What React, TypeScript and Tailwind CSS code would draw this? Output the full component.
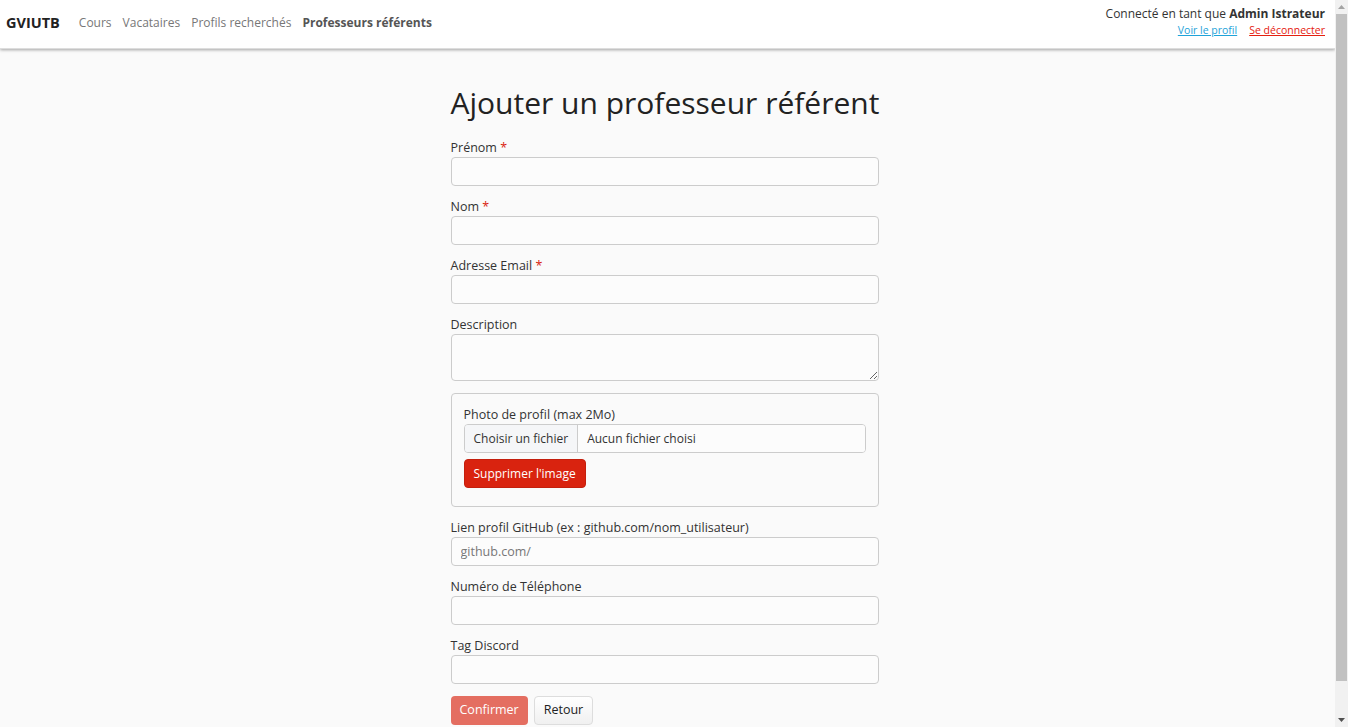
const font = { fontFamily: '"Open Sans", "Noto Sans", sans-serif' };

function Field({ label, required, placeholder }: { label: string; required?: boolean; placeholder?: string }) {
  return (
    <div className="mb-[12px]">
      <label className="block text-[12.5px] leading-[18px] text-[#333]">
        {label}
        {required && <span className="text-[#d9230f]"> *</span>}
      </label>
      <input
        className="block w-full h-[29px] px-[9px] text-[12.5px] text-[#555] placeholder:text-[#777] bg-[#fcfcfc] border border-[#ccc] rounded-[4px] outline-none"
        placeholder={placeholder}
      />
    </div>
  );
}

function Scrollbar() {
  return (
    <div className="w-[13px] h-screen bg-[#f1f1f1] flex flex-col items-center shrink-0">
      <div className="h-[14px] flex items-center justify-center">
        <svg width="7" height="4" viewBox="0 0 7 4"><path d="M0 4 L3.5 0 L7 4 Z" fill="#a3a3a3" /></svg>
      </div>
      <div className="w-[11px] h-[667px] bg-[#c1c1c1]" />
      <div className="flex-1" />
      <div className="h-[14px] flex items-center justify-center">
        <svg width="7" height="4" viewBox="0 0 7 4"><path d="M0 0 L3.5 4 L7 0 Z" fill="#505050" /></svg>
      </div>
    </div>
  );
}

export default function App() {
  return (
    <div style={font} className="flex h-screen overflow-hidden bg-[#fafafa] text-[#333]">
      <div className="flex-1 min-w-0">
        <header className="h-[49px] bg-white flex items-center justify-between pl-[6px] pr-[10px] shadow-[0_1px_3px_rgba(0,0,0,0.35)] border-b border-[#ddd]">
          <nav className="flex items-center -mt-[2px]">
            <span className="text-[14.5px] font-bold text-[#222] mr-[19px]">GVIUTB</span>
            <div className="flex gap-[11px] text-[12px] text-[#777]">
              <span>Cours</span>
              <span>Vacataires</span>
              <span>Profils recherchés</span>
              <span className="font-bold text-[#555]">Professeurs référents</span>
            </div>
          </nav>
          <div className="text-right self-start pt-[5px]">
            <div className="text-[12px] leading-[18px] text-[#333]">
              Connecté en tant que <span className="font-bold">Admin Istrateur</span>
            </div>
            <div className="text-[10.5px] leading-[14px] flex gap-[12px] justify-end">
              <a className="underline text-[#1fa3d9]">Voir le profil</a>
              <a className="underline text-[#e5200f]">Se déconnecter</a>
            </div>
          </div>
        </header>

        <div className="pr-[6px]">
          <main className="w-[428px] mx-auto pt-[36px]">
            <h1 className="text-[30px] leading-[36px] whitespace-nowrap text-[#222] mb-[18px] font-normal">Ajouter un professeur référent</h1>
            <Field label="Prénom" required />
            <Field label="Nom" required />
            <Field label="Adresse Email" required />
            <div className="mb-[12px]">
              <label className="block text-[12.5px] leading-[18px] text-[#333]">Description</label>
              <textarea className="block w-full h-[47px] px-[9px] py-[5px] text-[12.5px] bg-[#fcfcfc] border border-[#ccc] rounded-[4px] outline-none" />
            </div>
            <div className="border border-[#ccc] rounded-[4px] px-[12px] pt-[12px] pb-[18px] mb-[12px]">
              <label className="block text-[12.5px] leading-[18px] text-[#333]">Photo de profil (max 2Mo)</label>
              <div className="flex h-[29px] border border-[#ccc] rounded-[4px] text-[12px] text-[#333] overflow-hidden">
                <span className="flex items-center px-[9px] bg-[#f5f6f8] border-r border-[#ccc]">Choisir un fichier</span>
                <span className="flex items-center px-[9px] bg-[#fcfcfc] flex-1">Aucun fichier choisi</span>
              </div>
              <button className="block mt-[6px] h-[29px] px-[9px] text-[12px] text-white bg-[#d9230f] border border-[#c41f0d] rounded-[4px]">
                Supprimer l'image
              </button>
            </div>
            <Field label="Lien profil GitHub (ex : github.com/nom_utilisateur)" placeholder="github.com/" />
            <Field label="Numéro de Téléphone" />
            <Field label="Tag Discord" />
            <div className="flex gap-[6px]">
              <button className="h-[29px] px-[9px] text-[12.5px] text-white bg-[#e46e61] rounded-[4px]">Confirmer</button>
              <button className="h-[29px] px-[9px] text-[12.5px] text-[#222] bg-gradient-to-b from-white to-[#f0f0f0] border border-[#ddd] rounded-[4px]">Retour</button>
            </div>
          </main>
        </div>
      </div>
      <Scrollbar />
    </div>
  );
}
